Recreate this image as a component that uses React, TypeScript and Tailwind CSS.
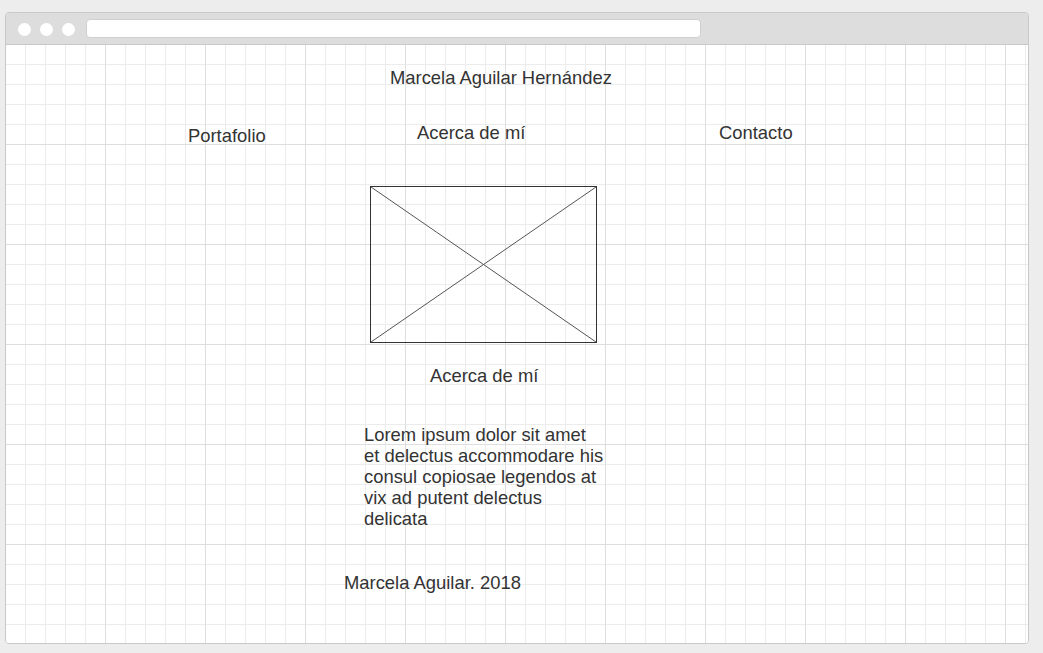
import React from "react";

export default function App() {
  const font = "font-['Liberation_Sans',Arial,sans-serif]";
  return (
    <div className={`w-[1043px] h-[653px] bg-[#ededed] pt-[12px] pl-[5px] ${font}`}>
      <div className="w-[1024px] h-[632px] border border-[#c8c8c8] rounded-[4px] overflow-hidden flex flex-col">
        {/* browser bar */}
        <div className="h-[32px] shrink-0 bg-[#dddddd] border-b border-[#c8c8c8] flex items-center pl-[12px]">
          <div className="flex items-center gap-[9px] mt-[1px]">
            <div className="w-[13px] h-[13px] rounded-full bg-white" />
            <div className="w-[13px] h-[13px] rounded-full bg-white" />
            <div className="w-[13px] h-[13px] rounded-full bg-white" />
          </div>
          <div className="ml-[11px] w-[615px] h-[19px] bg-white border border-[#cfcfcf] rounded-[4px]" />
        </div>
        {/* canvas */}
        <div className="flex-1 bg-white bg-[linear-gradient(to_right,#dedede_1px,transparent_1px),linear-gradient(to_bottom,#dedede_1px,transparent_1px),linear-gradient(to_right,#ececec_1px,transparent_1px),linear-gradient(to_bottom,#ececec_1px,transparent_1px)] bg-[size:100px_100px,100px_100px,20px_20px,20px_20px] bg-[position:-1px_-1px] text-[#333333] text-[18.4px] leading-[21px] flex flex-col items-start">
          <div className="ml-[384px] mt-[22px]">Marcela Aguilar Hernández</div>
          <div className="mt-[34px] flex items-start">
            <div className="ml-[182px] w-[229px] mt-[3px]">Portafolio</div>
            <div className="w-[302px]">Acerca de mí</div>
            <div>Contacto</div>
          </div>
          <div className="ml-[364px] mt-[40px] w-[227px] h-[157px] border border-[#333333]">
            <svg width="225" height="155" viewBox="0 0 225 155" className="block">
              <line x1="0" y1="0" x2="225" y2="155" stroke="#555555" strokeWidth="1" />
              <line x1="225" y1="0" x2="0" y2="155" stroke="#555555" strokeWidth="1" />
            </svg>
          </div>
          <div className="ml-[424px] mt-[22px]">Acerca de mí</div>
          <p className="ml-[358px] mt-[38px]">
            Lorem ipsum dolor sit amet
            <br />
            et delectus accommodare his
            <br />
            consul copiosae legendos at
            <br />
            vix ad putent delectus
            <br />
            delicata
          </p>
          <div className="ml-[338px] mt-[43px]">Marcela Aguilar. 2018</div>
        </div>
      </div>
    </div>
  );
}
